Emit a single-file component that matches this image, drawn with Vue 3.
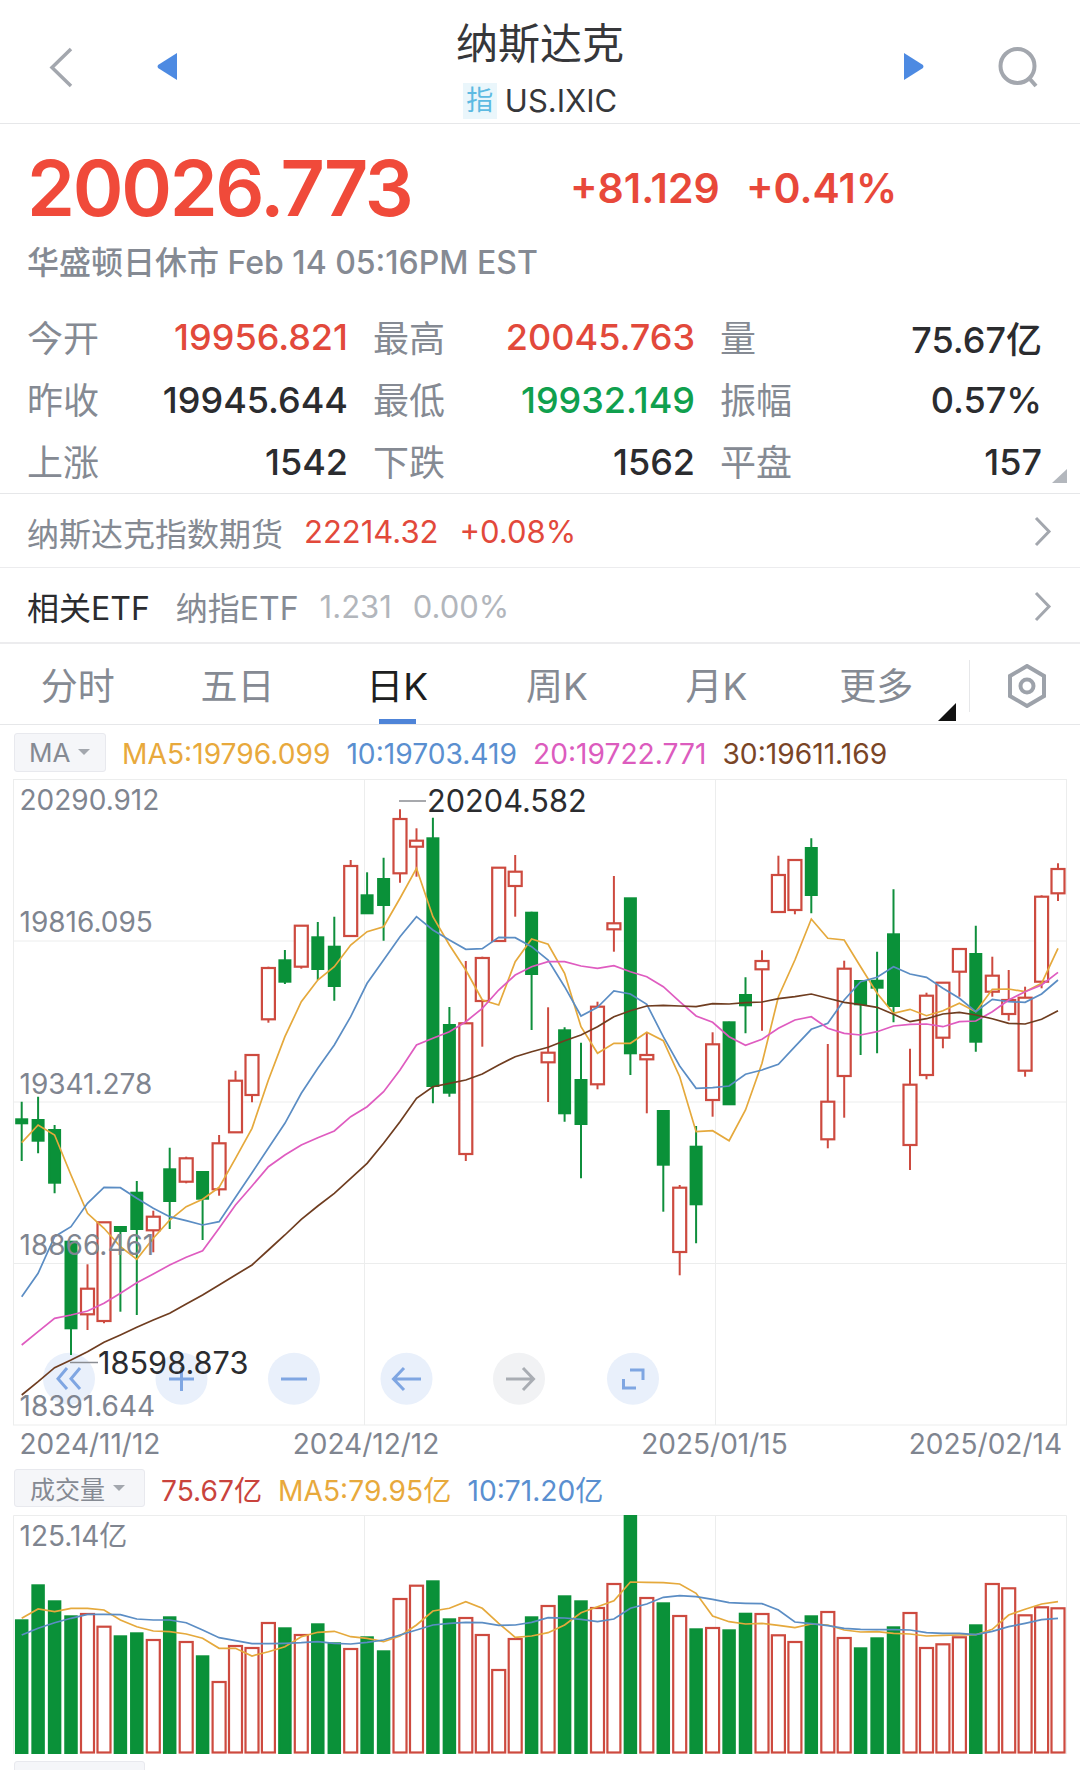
<template>
  <div class="page">
    <header class="topbar">
      <div class="nav nav-left">
        <svg class="chev" width="24" height="41" viewBox="0 0 24 41"><path d="M22 2 L3 20.5 L22 39" /></svg>
        <svg class="tri" width="20" height="27" viewBox="0 0 20 27"><path d="M20 0 V27 L1 15 Q0 13.5 1 12 Z" /></svg>
      </div>
      <div class="title-block">
        <div class="title">纳斯达克</div>
        <div class="subtitle"><span class="chip">指</span><span>US.IXIC</span></div>
      </div>
      <div class="nav nav-right">
        <svg class="tri" width="20" height="27" viewBox="0 0 20 27"><path d="M0 0 V27 L19 15 Q20 13.5 19 12 Z" /></svg>
        <svg class="search" width="40" height="41" viewBox="0 0 40 41">
          <circle cx="19.5" cy="19" r="17" />
          <path d="M31 31 L38 39" />
        </svg>
      </div>
    </header>

    <section class="quote">
      <div class="price-row">
        <span class="price">20026.773</span>
        <span class="change">+81.129</span>
        <span class="change">+0.41%</span>
      </div>
      <div class="session">华盛顿日休市 Feb 14 05:16PM EST</div>
    </section>

    <section class="stats">
      <div v-for="item in stats" :key="item.label" class="stat">
        <span class="stat-label">{{ item.label }}</span>
        <span class="stat-value" :class="item.tone">{{ item.value }}</span>
      </div>
      <span class="corner" />
    </section>

    <div class="link-row">
      <span class="muted">纳斯达克指数期货</span>
      <span class="num up gap-a">22214.32</span>
      <span class="num up gap-b">+0.08%</span>
      <svg class="arrow" width="18" height="31" viewBox="0 0 18 31"><path d="M2 2 L15 15.5 L2 29" /></svg>
    </div>
    <div class="link-row">
      <span class="dark">相关ETF</span>
      <span class="muted gap-c">纳指ETF</span>
      <span class="num faint gap-d">1.231</span>
      <span class="num faint gap-d">0.00%</span>
      <svg class="arrow" width="18" height="31" viewBox="0 0 18 31"><path d="M2 2 L15 15.5 L2 29" /></svg>
    </div>

    <nav class="tabs">
      <div class="tab-list">
        <div v-for="tab in tabs" :key="tab" class="tab" :class="{ active: tab === '日K' }">{{ tab }}</div>
      </div>
      <span class="more-mark" />
      <div class="tab-settings">
        <svg width="40" height="44" viewBox="0 0 40 44">
          <path d="M20 2 L37 12 V32 L20 42 L3 32 V12 Z" />
          <circle cx="20" cy="22" r="6.5" />
        </svg>
      </div>
    </nav>

    <div class="legend legend-ma">
      <span class="pill pill-ma">MA<i class="caret" /></span>
      <span class="gold">MA5:19796.099</span>
      <span class="blue">10:19703.419</span>
      <span class="magenta">20:19722.771</span>
      <span class="brown">30:19611.169</span>
    </div>

    <svg class="chart chart-main" width="1080" height="681" viewBox="0 779 1080 681">
      <rect class="frame" x="13.5" y="779.5" width="1053" height="645.5" />
      <path class="grid" d="M13.5 941 H1066.5 M13.5 1102 H1066.5 M13.5 1263.5 H1066.5 M364.5 779.5 V1425 M715.5 779.5 V1425" />

      <g v-for="btn in buttons" :key="btn.x">
        <circle :cx="btn.x" cy="1378.7" r="26" :class="btn.off ? 'btn-off' : 'btn-on'" />
      </g>
      <path class="btn-icon" d="M67 1368 L58 1378.7 L67 1389 M80 1368 L71 1378.7 L80 1389" />
      <path class="btn-icon" d="M169 1379 H194 M181.5 1367 V1391" />
      <path class="btn-icon" d="M281 1379 H307" />
      <path class="btn-icon" d="M394 1379 H421 M404 1368 L393.5 1379 L404 1390" />
      <path class="btn-icon off" d="M506 1379 H533 M523 1368 L533.5 1379 L523 1390" />
      <path class="btn-icon" d="M630 1370 H643 V1380 M623.5 1379 V1388 H636" />

      <g v-for="c in candles" :key="c.x">
        <template v-if="c.up">
          <path class="wick up-wick" :d="`M${c.x} ${c.high} V${c.top} M${c.x} ${c.bottom} V${c.low}`" />
          <rect class="body-up" :x="c.x - 5.5" :y="c.top" width="11" :height="Math.max(c.bottom - c.top, 2)" />
        </template>
        <template v-else>
          <path class="wick down-wick" :d="`M${c.x} ${c.high} V${c.low}`" />
          <rect class="body-down" :x="c.x - 6.5" :y="c.top" width="13" :height="Math.max(c.bottom - c.top, 2)" />
        </template>
      </g>

      <polyline class="ma ma5" :points="priceLines.ma5" />
      <polyline class="ma ma10" :points="priceLines.ma10" />
      <polyline class="ma ma20" :points="priceLines.ma20" />
      <polyline class="ma ma30" :points="priceLines.ma30" />

      <text class="axis" x="19.5" y="810">20290.912</text>
      <text class="axis" x="19.5" y="932">19816.095</text>
      <text class="axis" x="19.5" y="1094">19341.278</text>
      <text class="axis" x="19.5" y="1255">18866.461</text>
      <text class="axis" x="19.5" y="1416">18391.644</text>

      <path class="mark-line" d="M399 801 H426 M70 1362.5 H98" />
      <text class="mark" x="427" y="812">20204.582</text>
      <text class="mark" x="98" y="1374">18598.873</text>

      <text class="axis" x="19.5" y="1454">2024/11/12</text>
      <text class="axis" x="366" y="1454" text-anchor="middle">2024/12/12</text>
      <text class="axis" x="714.5" y="1454" text-anchor="middle">2025/01/15</text>
      <text class="axis" x="1062" y="1454" text-anchor="end">2025/02/14</text>
    </svg>

    <div class="legend legend-vol">
      <span class="pill pill-vol">成交量<i class="caret" /></span>
      <span class="vol-now">75.67亿</span>
      <span class="gold">MA5:79.95亿</span>
      <span class="blue">10:71.20亿</span>
    </div>

    <svg class="chart chart-vol" width="1080" height="239" viewBox="0 1515 1080 239">
      <path class="grid" d="M13.5 1754 V1515.5 H1066.5 V1754 M364.5 1515.5 V1754 M715.5 1515.5 V1754" />
      <g v-for="bar in bars" :key="bar.x">
        <rect v-if="bar.up" class="body-up" :x="bar.x - 5.75" :y="bar.y + 1" width="11.5" :height="1752.5 - bar.y" />
        <rect v-else class="body-down" :x="bar.x - 6.5" :y="bar.y" width="13" :height="1752.5 - bar.y" />
      </g>
      <polyline class="ma ma5" :points="volLines.ma5" />
      <polyline class="ma ma10" :points="volLines.ma10" />
      <text class="axis" x="19.5" y="1546">125.14亿</text>
    </svg>

    <div class="pill pill-next" />
  </div>
</template>

<script setup>
const stats = [
  { label: '今开', value: '19956.821', tone: 'up' },
  { label: '最高', value: '20045.763', tone: 'up' },
  { label: '量', value: '75.67亿' },
  { label: '昨收', value: '19945.644' },
  { label: '最低', value: '19932.149', tone: 'down' },
  { label: '振幅', value: '0.57%' },
  { label: '上涨', value: '1542' },
  { label: '下跌', value: '1562' },
  { label: '平盘', value: '157' }
]

const tabs = ['分时', '五日', '日K', '周K', '月K', '更多']

const buttons = [
  { x: 69 },
  { x: 181.5 },
  { x: 294 },
  { x: 406.5 },
  { x: 519, off: true },
  { x: 633 }
]

// candle data measured off the screen in 1/3 px rows: high, body top, body bottom, low, green?
const rawCandles = [
  [995, 1048, 1060, 1173, 1], [980, 1050, 1112, 1150, 1], [1065, 1080, 1238, 1270, 1], [1415, 1415, 1675, 1755, 1],
  [1483, 1556, 1633, 1680, 0], [1357, 1357, 1653, 1660, 0], [1371, 1371, 1383, 1625, 1], [1233, 1268, 1377, 1635, 1],
  [1322, 1340, 1381, 1447, 0], [1133, 1198, 1293, 1377, 1], [1160, 1165, 1235, 1240, 0], [1206, 1206, 1286, 1410, 1],
  [1095, 1120, 1258, 1277, 0], [902, 932, 1087, 1087, 0], [852, 855, 975, 997, 0], [590, 594, 748, 758, 0],
  [540, 571, 635, 642, 1], [466, 467, 590, 596, 0], [456, 502, 597, 630, 1], [440, 530, 648, 692, 1],
  [270, 288, 498, 498, 0], [307, 376, 430, 430, 1], [263, 327, 405, 512, 1], [118, 147, 310, 338, 0],
  [175, 212, 230, 320, 0], [143, 205, 948, 1000, 1], [711, 765, 968, 980, 1], [573, 760, 1152, 1173, 0],
  [560, 564, 693, 830, 0], [292, 293, 513, 513, 0], [255, 305, 348, 440, 0], [425, 428, 612, 780, 1],
  [712, 848, 877, 996, 0], [772, 781, 1030, 1055, 1], [818, 930, 1062, 1225, 1], [695, 710, 943, 958, 0],
  [318, 460, 478, 545, 0], [385, 385, 850, 915, 1], [787, 855, 868, 1030, 0], [1023, 1023, 1184, 1325, 1],
  [1245, 1253, 1446, 1516, 0], [1068, 1130, 1303, 1420, 1], [787, 823, 990, 1040, 0], [755, 757, 1003, 1003, 1],
  [622, 675, 706, 790, 1], [541, 573, 598, 782, 0], [257, 315, 426, 426, 0], [268, 270, 420, 433, 0],
  [205, 234, 375, 430, 1], [822, 995, 1108, 1135, 0], [572, 596, 918, 1043, 0], [633, 633, 703, 855, 1],
  [545, 632, 653, 850, 1], [358, 493, 708, 757, 1], [836, 944, 1125, 1200, 0], [668, 677, 915, 928, 0],
  [636, 638, 803, 835, 0], [536, 537, 605, 680, 0], [467, 552, 815, 845, 1], [560, 617, 665, 680, 0],
  [600, 690, 732, 752, 0], [650, 683, 902, 920, 0], [376, 380, 635, 655, 0], [280, 297, 370, 393, 0]
]

const rawMa5 = [1118, 1065, 1095, 1215, 1330, 1375, 1430, 1468, 1405, 1350, 1310, 1288, 1252, 1165, 1075, 930, 800, 695, 630, 590, 525, 485, 470, 385, 295, 440, 525, 600, 690, 705, 575, 507, 523, 610, 770, 850, 820, 820, 787, 812, 920, 1085, 1082, 1112, 1020, 880, 680, 570, 447, 505, 510, 590, 670, 730, 718, 737, 722, 700, 725, 658, 657, 665, 640, 535]
const rawMa10 = [1580, 1510, 1400, 1370, 1300, 1252, 1253, 1285, 1315, 1340, 1352, 1365, 1355, 1282, 1208, 1134, 1060, 970, 895, 825, 740, 640, 570, 500, 440, 480, 510, 538, 536, 502, 503, 530, 570, 650, 738, 712, 663, 672, 703, 800, 888, 955, 953, 948, 913, 900, 883, 830, 778, 760, 690, 635, 622, 590, 612, 622, 655, 685, 725, 688, 695, 697, 672, 630]
const rawMa20 = [1725, 1685, 1645, 1635, 1623, 1600, 1570, 1538, 1512, 1485, 1462, 1442, 1375, 1305, 1248, 1190, 1155, 1125, 1103, 1083, 1040, 1010, 965, 900, 825, 805, 785, 755, 715, 660, 615, 590, 575, 575, 588, 595, 587, 605, 620, 650, 695, 738, 757, 800, 826, 808, 775, 750, 740, 775, 790, 795, 785, 768, 763, 762, 770, 755, 753, 725, 690, 665, 645, 607]
const rawMa30 = [1875, 1835, 1793, 1770, 1745, 1717, 1695, 1672, 1650, 1630, 1602, 1575, 1545, 1515, 1485, 1440, 1395, 1348, 1308, 1270, 1225, 1180, 1120, 1055, 985, 950, 940, 930, 912, 885, 860, 845, 832, 812, 795, 770, 740, 722, 708, 706, 708, 710, 701, 702, 698, 696, 686, 680, 672, 685, 697, 704, 712, 733, 755, 746, 732, 727, 735, 746, 760, 762, 748, 722]

const rawVol = [568, 463, 511, 556, 552, 590, 616, 607, 630, 559, 636, 676, 756, 648, 654, 579, 592, 615, 580, 637, 657, 619, 661, 507, 467, 451, 565, 564, 615, 720, 627, 559, 528, 496, 511, 534, 462, 255, 504, 517, 558, 595, 594, 598, 548, 552, 616, 636, 556, 546, 624, 652, 622, 589, 549, 654, 643, 622, 583, 462, 475, 556, 532, 535]
const rawVolMa5 = [565, 537, 545, 535, 535, 540, 570, 590, 603, 605, 612, 625, 655, 655, 678, 665, 650, 620, 607, 604, 620, 625, 635, 618, 585, 543, 535, 515, 535, 580, 622, 618, 608, 585, 548, 530, 512, 456, 457, 458, 462, 490, 558, 575, 582, 580, 586, 593, 582, 585, 600, 606, 605, 610, 612, 618, 616, 615, 614, 598, 555, 538, 522, 515]
const rawVolMa10 = [615, 595, 578, 565, 553, 553, 554, 567, 570, 570, 578, 600, 623, 632, 641, 641, 640, 638, 635, 640, 642, 637, 630, 615, 600, 585, 580, 577, 578, 586, 585, 577, 563, 564, 568, 575, 567, 535, 522, 502, 497, 500, 508, 518, 520, 521, 540, 576, 581, 587, 595, 598, 599, 599, 600, 608, 610, 610, 614, 604, 590, 580, 569, 565]

const xAt = i => +(21.7 + 16.45 * i).toFixed(1)
const priceY = z => +(770 + z / 3).toFixed(1)
const volY = z => +(1430 + z / 3).toFixed(1)
const toPoints = (list, toY) => list.map((z, i) => `${xAt(i)},${toY(z)}`).join(' ')

const candles = rawCandles.map(([high, top, bottom, low, green], i) => ({
  x: xAt(i),
  high: priceY(high),
  top: priceY(top),
  bottom: priceY(bottom),
  low: priceY(low),
  up: !!green
}))

const priceLines = {
  ma5: toPoints(rawMa5, priceY),
  ma10: toPoints(rawMa10, priceY),
  ma20: toPoints(rawMa20, priceY),
  ma30: toPoints(rawMa30, priceY)
}

const bars = rawVol.map((z, i) => ({ x: xAt(i), y: volY(z), up: !!rawCandles[i][4] }))

const volLines = {
  ma5: toPoints(rawVolMa5, volY),
  ma10: toPoints(rawVolMa10, volY)
}
</script>

<style>
html,
body {
  margin: 0;
  background: #fff;
  overflow: hidden;
}
</style>

<style scoped>
.page {
  width: 1080px;
  height: 1770px;
  overflow: hidden;
  background: #fff;
  font-family: Inter, "Noto Sans CJK SC", sans-serif;
  color: #2b2c2f;
  position: relative;
}

.topbar {
  display: grid;
  grid-template-columns: 1fr auto 1fr;
  height: 123px;
  border-bottom: 1px solid #e6e7e9;
  box-sizing: content-box;
}

.nav {
  display: flex;
  align-items: flex-start;
  padding-top: 47px;
}

.nav-left {
  padding-left: 49px;
  gap: 84px;
}

.nav-left .tri,
.nav-right .tri {
  margin-top: 6px;
}

.nav-right {
  justify-content: flex-end;
  padding-right: 42px;
  gap: 74px;
}

.chev {
  fill: none;
  stroke: #a3a7ae;
  stroke-width: 3.5;
}

.tri {
  fill: #4d8ae2;
}

.search {
  fill: none;
  stroke: #a3a7ae;
  stroke-width: 4;
}

.title-block {
  text-align: center;
  padding-top: 20px;
}

.title {
  font-size: 42px;
  line-height: 48px;
  color: #36373a;
}

.subtitle {
  display: flex;
  align-items: center;
  justify-content: center;
  gap: 8px;
  margin-top: 15px;
  font-size: 31px;
  line-height: 36px;
  color: #36373a;
}

.chip {
  width: 34px;
  height: 36px;
  line-height: 36px;
  background: #eaf6fb;
  color: #5cbae2;
  font-size: 27px;
  text-align: center;
}

.quote {
  padding: 24px 0 0 27px;
}

.price-row {
  display: flex;
  align-items: center;
  height: 80px;
}

.price {
  font-size: 77px;
  font-weight: 600;
  line-height: 80px;
  letter-spacing: -2.3px;
  color: #f04a3a;
  width: 543px;
}

.change {
  font-size: 41px;
  font-weight: 600;
  color: #e8483a;
  width: 176px;
}

.session {
  margin-top: 15px;
  margin-bottom: -1px;
  font-size: 32px;
  font-weight: 500;
  line-height: 40px;
  color: #858a93;
}

.stats {
  display: grid;
  grid-template-columns: 321px 322px 322px;
  grid-template-rows: repeat(3, 62.4px);
  column-gap: 25px;
  margin-top: 24px;
  padding-left: 27px;
  position: relative;
}

.stat {
  display: flex;
  align-items: center;
  justify-content: space-between;
}

.stat-label {
  font-size: 36px;
  color: #858a93;
  margin-top: -3px;
}

.stat-value {
  font-size: 36px;
  font-weight: 500;
  color: #2b2c2f;
}

.stat-value.up,
.up {
  color: #e2493b;
}

.stat-value.down {
  color: #10a04e;
}

.corner {
  position: absolute;
  right: 13px;
  bottom: 10px;
  width: 0;
  height: 0;
  border-left: 15px solid transparent;
  border-bottom: 14px solid #b3b7bd;
}

.link-row {
  display: flex;
  align-items: center;
  box-sizing: border-box;
  height: 75px;
  padding: 2px 28px 0 27px;
  border-top: 1px solid #e6e7e9;
  border-bottom: 1px solid #ececee;
  font-size: 32px;
  position: relative;
}

.link-row + .link-row {
  border-top: 0;
  height: 76px;
  border-bottom: 2px solid #ececee;
}

.num {
  font-size: 31px;
}

.muted {
  color: #858a93;
}

.dark {
  color: #2b2c2f;
}

.faint {
  color: #b2b6bc;
}

.gap-a {
  margin-left: 21px;
}

.gap-b {
  margin-left: 21px;
}

.gap-c {
  margin-left: 26px;
}

.gap-d {
  margin-left: 21px;
}

.arrow {
  margin-left: auto;
  fill: none;
  stroke: #a3a7ae;
  stroke-width: 3;
}

.tabs {
  display: flex;
  align-items: stretch;
  height: 81px;
  box-sizing: border-box;
  border-bottom: 1px solid #e6e7e9;
  position: relative;
}

.tab-list {
  display: flex;
  width: 958px;
  margin-left: -2px;
  flex: none;
}

.tab {
  flex: 1;
  text-align: center;
  font-size: 37px;
  line-height: 86px;
  color: #858a93;
  position: relative;
}

.tab.active {
  color: #1d1e20;
}

.tab.active::after {
  content: "";
  position: absolute;
  left: 62px;
  bottom: 0;
  width: 37px;
  height: 5px;
  background: #4e84d8;
}

.more-mark {
  position: absolute;
  left: 938px;
  top: 59px;
  width: 0;
  height: 0;
  border-left: 18px solid transparent;
  border-bottom: 18px solid #111;
}

.tab-settings {
  display: flex;
  align-items: center;
  justify-content: center;
  flex: 1;
  margin: 16px 0 12px 13px;
  padding-left: 4px;
  border-left: 1px solid #e6e7e9;
}

.tab-settings svg {
  fill: none;
  stroke: #9da2aa;
  stroke-width: 4;
}

.legend {
  display: flex;
  align-items: center;
  font-size: 28.2px;
}

.legend-ma {
  height: 54px;
  padding-left: 14px;
  gap: 16px;
}

.legend-ma > span:not(.pill) {
  margin-top: 4px;
}

.pill {
  box-sizing: border-box;
  background: #f5f6f9;
  border: 1px solid #e8e9ee;
  border-radius: 3px;
  color: #858a93;
  display: flex;
  align-items: center;
}

.pill-ma {
  width: 92px;
  height: 39px;
  font-size: 26px;
  padding-left: 14px;
}

.caret {
  display: inline-block;
  width: 0;
  height: 0;
  margin-left: 8px;
  border-left: 6px solid transparent;
  border-right: 6px solid transparent;
  border-top: 6px solid #a3a7ae;
}

.gold {
  color: #e8a93c;
}

.blue {
  color: #5a8fd0;
}

.magenta {
  color: #dc5cbe;
}

.brown {
  color: #7a4526;
}

.vol-now {
  color: #c9433c;
}

.legend-vol {
  height: 55px;
  padding-left: 14px;
  gap: 16px;
}

.legend-vol > span:not(.pill) {
  margin-top: 2px;
}

.pill-vol {
  width: 131px;
  height: 38px;
  font-size: 25px;
  padding-left: 15px;
}

.chart {
  display: block;
}

.frame,
.grid {
  fill: none;
  stroke: #eceded;
  stroke-width: 1;
}

.btn-on {
  fill: #e9f0fb;
}

.btn-off {
  fill: #f1f2f4;
}

.btn-icon {
  fill: none;
  stroke: #7fa6e2;
  stroke-width: 3;
}

.btn-icon.off {
  stroke: #a9adb3;
}

.wick {
  fill: none;
  stroke-width: 2;
}

.up-wick {
  stroke: #0f8f3c;
}

.down-wick {
  stroke: #cd4a3f;
}

.body-up {
  fill: #0a9139;
  stroke: #0a9139;
  stroke-width: 2;
}

.body-down {
  fill: #fff;
  stroke: #cd4a3f;
  stroke-width: 2.2;
}

.ma {
  fill: none;
  stroke-width: 1.7;
}

.ma5 {
  stroke: #e5a93c;
}

.ma10 {
  stroke: #5b8dc4;
}

.ma20 {
  stroke: #df5cc0;
}

.ma30 {
  stroke: #6f3d20;
}

.axis {
  font-size: 28px;
  fill: #7f8590;
}

.mark {
  font-size: 30.7px;
  fill: #2b2c2f;
}

.mark-line {
  fill: none;
  stroke: #8a8d92;
  stroke-width: 1.5;
}

.pill-next {
  width: 131px;
  height: 20px;
  margin: 7px 0 0 14px;
}
</style>
